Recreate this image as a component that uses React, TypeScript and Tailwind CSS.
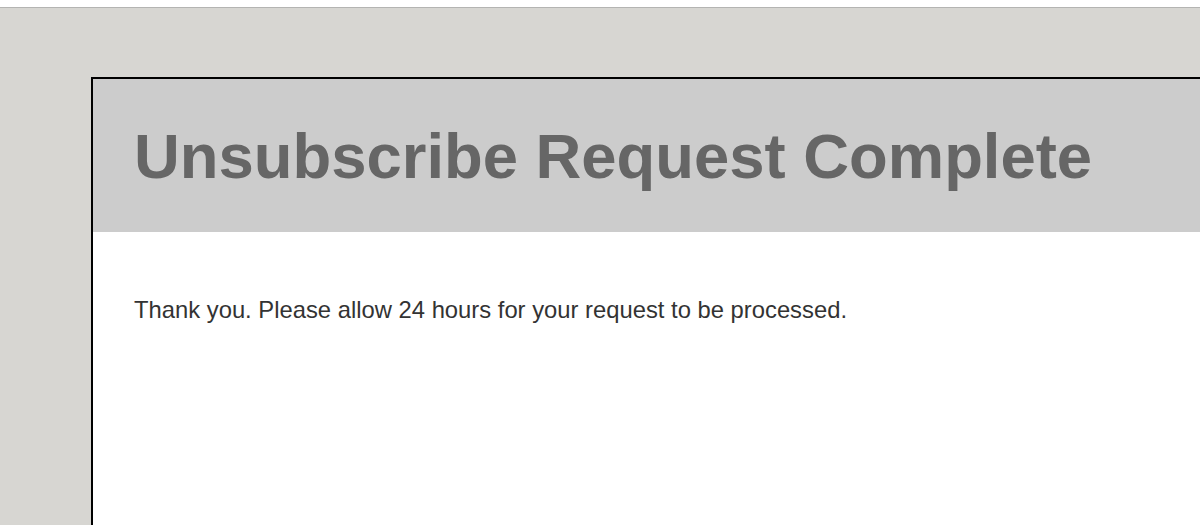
export default function App() {
  return (
    <div className="w-[1200px] h-[525px] overflow-hidden bg-white" style={{ fontFamily: '"Liberation Sans", Arial, sans-serif' }}>
      <div className="h-[7px] bg-white" />
      <div className="h-[518px] border-t border-[#b4b4b2] bg-[#d7d6d2] pt-[69px] pl-[91px]">
        <div className="h-full border-l-2 border-t-2 border-black bg-white">
          <div className="h-[153px] bg-[#cccccc] pl-[41px] pt-[39px]">
            <h1 className="text-[63.4px] font-bold leading-[76px] text-[#666666]">Unsubscribe Request Complete</h1>
          </div>
          <p className="pl-[41px] pt-[64px] text-[23.8px] leading-[28px] text-[#333333]">Thank you. Please allow 24 hours for your request to be processed.</p>
        </div>
      </div>
    </div>
  );
}
